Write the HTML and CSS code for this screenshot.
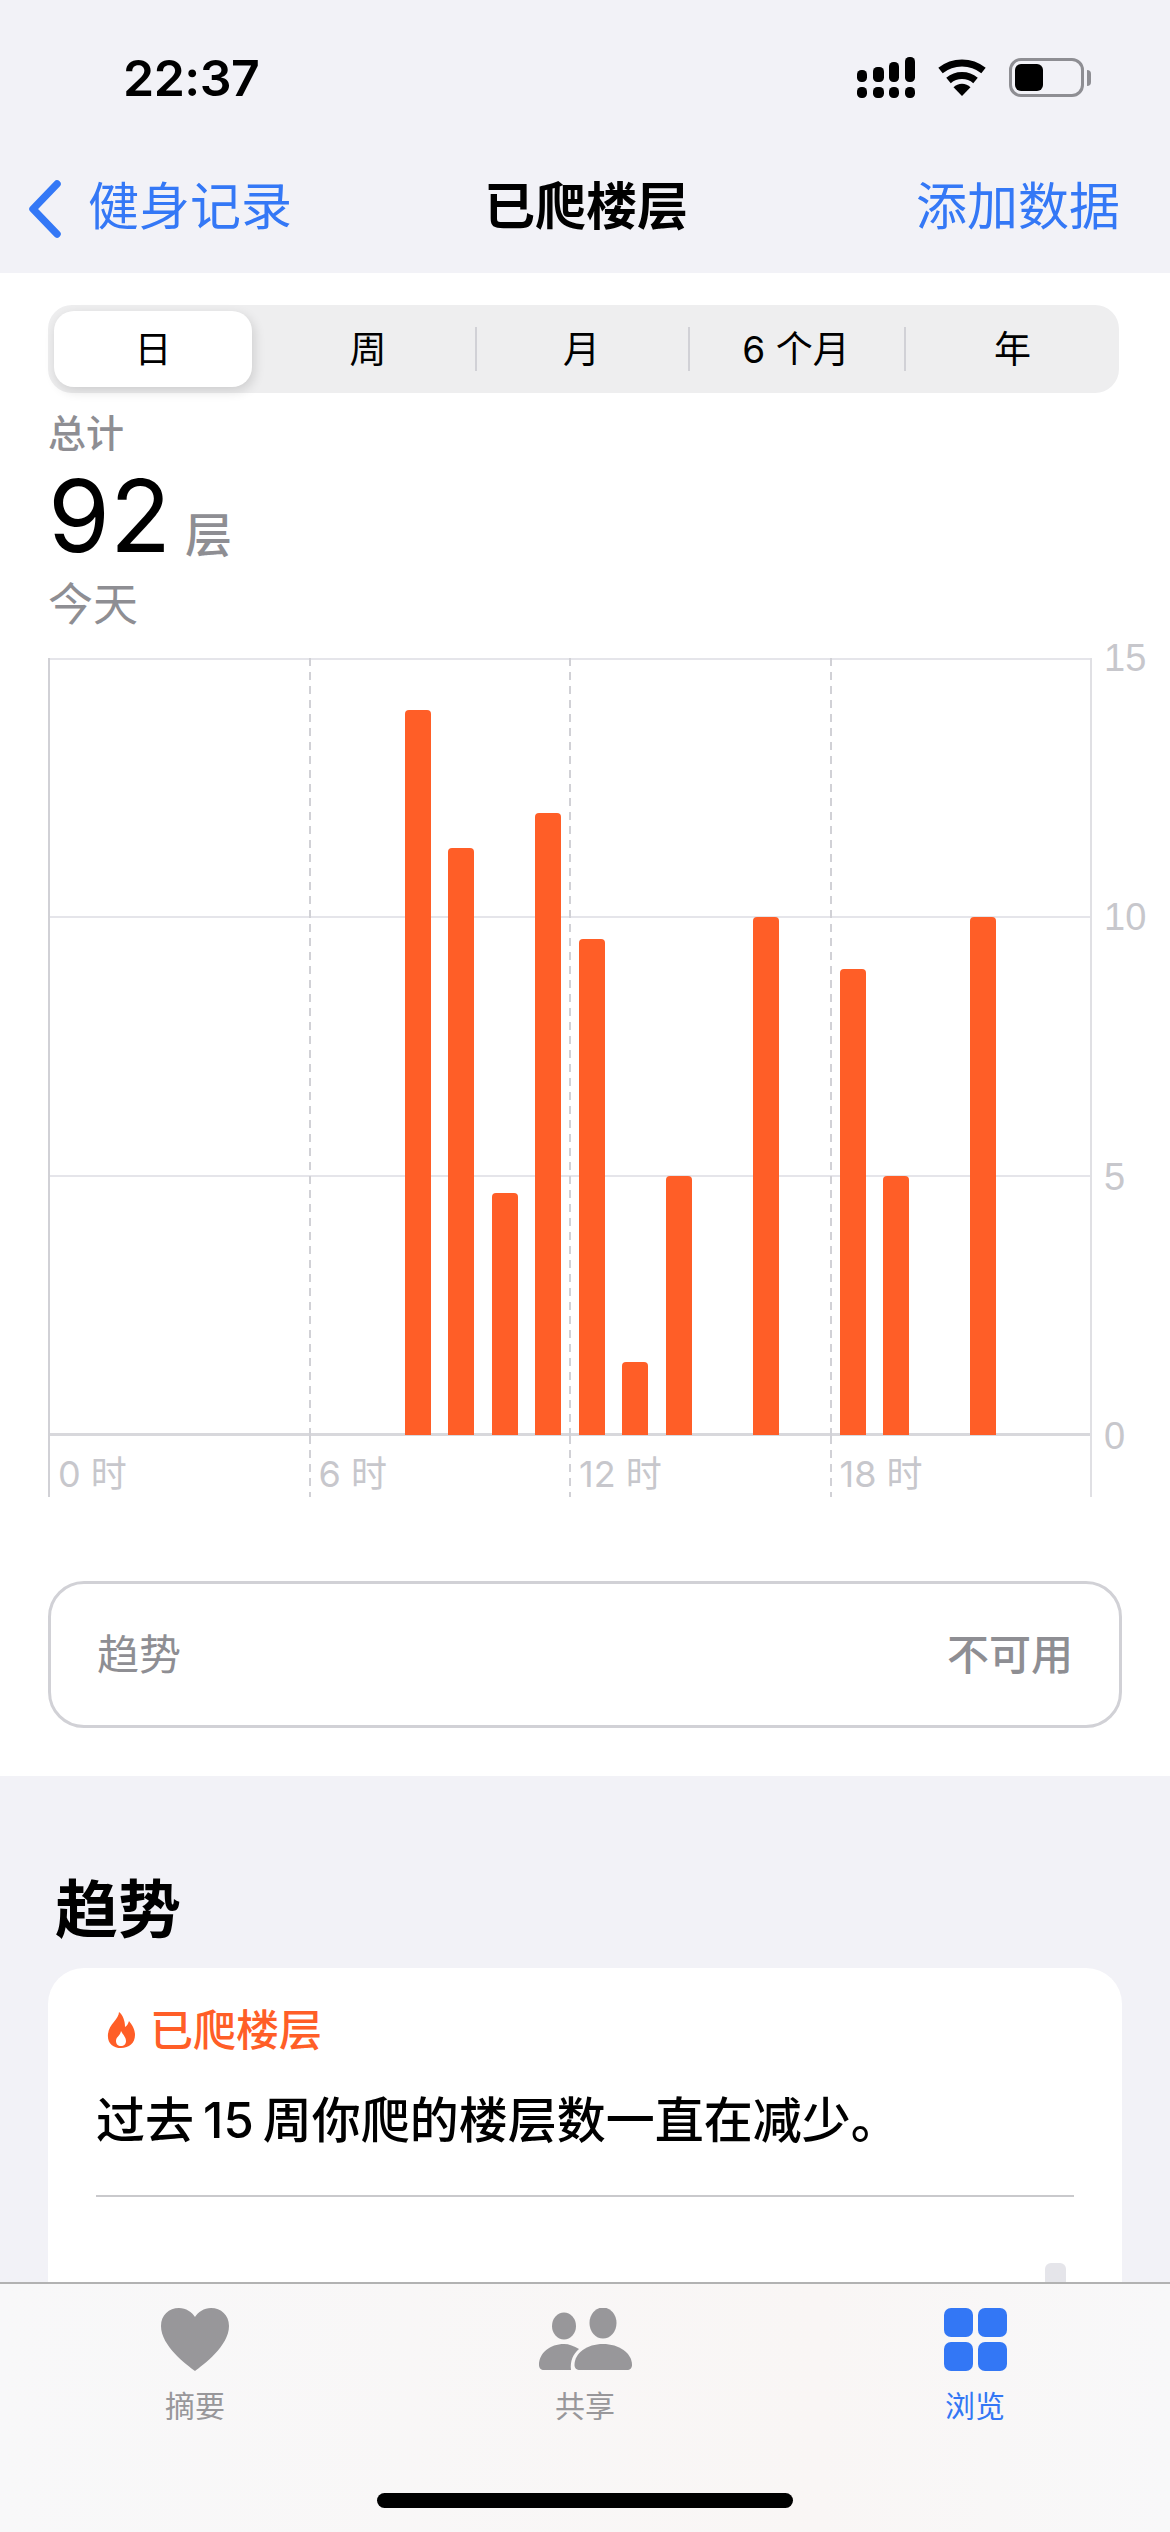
FILE: index.html
```html
<!DOCTYPE html>
<html lang="zh-CN">
  <head>
    <title>已爬楼层</title>
    <meta charset="UTF-8" />
    <meta name="viewport" content="width=device-width" />
    <link rel="stylesheet" href="styles.css">
  </head>
  <body>
    <div class="phone">
      <!-- Status bar and navigation -->
      <header class="top">
        <div class="status">
          <span class="time">22:37</span>
          <div class="status-icons">
            <svg class="signal" width="58" height="41" viewBox="0 0 58 41">
              <rect x="0" y="13" width="10" height="12" rx="4.5" />
              <rect x="16" y="10" width="11" height="15" rx="4.5" />
              <rect x="32" y="5" width="10" height="20" rx="4.5" />
              <rect x="48" y="0" width="10" height="25" rx="4.5" />
              <rect x="0" y="30" width="10" height="11" rx="4.5" />
              <rect x="16" y="30" width="11" height="11" rx="4.5" />
              <rect x="32" y="30" width="10" height="11" rx="4.5" />
              <rect x="48" y="30" width="10" height="11" rx="4.5" />
            </svg>
            <svg class="wifi" width="50" height="38" viewBox="0 0 50 38">
              <path class="wifi-arc" d="M3.5 12.5A34.5 34.5 0 0 1 46.5 12.5" />
              <path class="wifi-arc" d="M11.5 22.5A21 21 0 0 1 38.5 22.5" />
              <path d="M25 38L16.5 29.2A12 12 0 0 1 33.5 29.2Z" />
            </svg>
            <div class="battery">
              <div class="battery-shell"><div class="battery-fill"></div></div>
              <div class="battery-nub"></div>
            </div>
          </div>
        </div>
        <nav class="nav">
          <a class="nav-back">
            <svg width="34" height="58" viewBox="0 0 34 58">
              <path d="M29 4L5 29L29 54" />
            </svg>
            <span>健身记录</span>
          </a>
          <h1>已爬楼层</h1>
          <a class="nav-action">添加数据</a>
        </nav>
      </header>

      <!-- Chart section -->
      <section class="summary">
        <div class="segments">
          <div class="segment active">日</div>
          <div class="segment">周</div>
          <div class="segment split">月</div>
          <div class="segment split">6 个月</div>
          <div class="segment split last">年</div>
        </div>

        <p class="total-label">总计</p>
        <p class="total"><span class="total-num">92</span><span class="total-unit">层</span></p>
        <p class="total-date">今天</p>

        <div class="chart">
          <div class="plot">
            <div class="h-lines"><div></div><div></div><div></div></div>
            <div class="v-lines"><div></div><div></div><div></div><div></div></div>
            <div class="bars">
              <div></div><div></div><div></div><div></div><div></div><div></div>
              <div></div><div></div>
              <div class="bar" style="height: 93.33%"></div>
              <div class="bar" style="height: 75.6%"></div>
              <div class="bar" style="height: 31.1%"></div>
              <div class="bar" style="height: 80%"></div>
              <div class="bar" style="height: 63.8%"></div>
              <div class="bar" style="height: 9.4%"></div>
              <div class="bar" style="height: 33.33%"></div>
              <div></div>
              <div class="bar" style="height: 66.67%"></div>
              <div></div>
              <div class="bar" style="height: 60%"></div>
              <div class="bar" style="height: 33.33%"></div>
              <div></div>
              <div class="bar" style="height: 66.67%"></div>
              <div></div><div></div>
            </div>
          </div>
          <div class="y-axis">
            <span>15</span><span>10</span><span>5</span><span>0</span>
          </div>
          <div class="x-axis">
            <div>0 时</div><div>6 时</div><div>12 时</div><div>18 时</div>
          </div>
        </div>

        <div class="trend-row">
          <span>趋势</span>
          <span class="trend-value">不可用</span>
        </div>
      </section>

      <!-- Trends section -->
      <section class="trends">
        <h2>趋势</h2>
        <div class="trend-card">
          <div class="trend-title">
            <svg width="30" height="38" viewBox="0 0 30 38">
              <path class="flame" d="M13 1C13 8 3 13 2 23C1 32 7 37 15 37C23 37 29 32 29 24C29 18 26 14 23 10C22 13 21 15 19 16C19 10 17 4 13 1Z" />
              <path class="flame-core" d="M15 20C14 25 10 26 10 30C10 33 12 35 15 35C18 35 20 33 20 30C20 26 17 24 15 20Z" />
            </svg>
            <span>已爬楼层</span>
          </div>
          <p class="trend-text">过去 15 周你爬的楼层数一直在减少。</p>
          <div class="trend-divider"></div>
          <div class="mini-bar"></div>
        </div>
      </section>

      <!-- Tab bar sits over the scrolled content -->
      <footer class="tabbar">
        <div class="tab">
          <svg width="68" height="63" viewBox="0 0 68 63">
            <path d="M34 63C26 57 0 38 0 18C0 7 8 0 18 0C25 0 31 4 34 9C37 4 43 0 50 0C60 0 68 7 68 18C68 38 42 57 34 63Z" />
          </svg>
          <span>摘要</span>
        </div>
        <div class="tab">
          <svg width="93" height="63" viewBox="0 0 93 63">
            <ellipse cx="25" cy="18" rx="12" ry="13.5" />
            <ellipse cx="64" cy="15" rx="13.5" ry="15.5" />
            <path d="M0 57C0 45 11 36 25 36C30 36 35 38 40 41C34 46 31 53 32 62H5C2 62 0 60 0 57Z" />
            <path d="M35.5 57C35.5 45 48 36 64 36C80 36 93 45 93 57C93 60 91 62 88 62H41C37.5 62 35.5 60 35.5 57Z" />
          </svg>
          <span>共享</span>
        </div>
        <div class="tab current">
          <div class="browse-icon"><i></i><i></i><i></i><i></i></div>
          <span>浏览</span>
        </div>
        <div class="home-indicator"></div>
      </footer>
    </div>
  </body>
</html>
```

FILE: styles.css
```css
* {
  box-sizing: border-box;
}

body {
  margin: 0;
  background-color: #f2f2f7;
  color: #000;
  font-family: Inter, "Noto Sans CJK SC", sans-serif;
}

p,
h1,
h2 {
  margin: 0;
}

.phone {
  position: relative;
  width: 1170px;
  height: 2532px;
  overflow: hidden;
  background-color: #f2f2f7;
}

/* Status bar and navigation */
.top {
  height: 273px;
  background-color: #f2f2f7;
}

.status {
  display: flex;
  align-items: flex-start;
  justify-content: space-between;
  height: 148px;
  padding: 49px 79px 0 123px;
}

.time {
  font-size: 50px;
  font-weight: 600;
  line-height: 58px;
  letter-spacing: -0.5px;
}

.status-icons {
  display: flex;
  align-items: flex-start;
  padding-top: 8px;
}

.signal {
  margin-right: 22px;
}

.wifi {
  margin-top: 1px;
  margin-right: 22px;
}

.wifi-arc {
  fill: none;
  stroke: #000;
  stroke-width: 7px;
}

.battery {
  display: flex;
  align-items: center;
  height: 39px;
  margin-top: 1px;
}

.battery-shell {
  width: 75px;
  height: 39px;
  padding: 3px;
  border: 3px solid #8e8e93;
  border-radius: 12px;
}

.battery-fill {
  width: 28px;
  height: 27px;
  border-radius: 6px;
  background-color: #000;
}

.battery-nub {
  width: 4px;
  height: 16px;
  margin-left: 3px;
  border-radius: 0 4px 4px 0;
  background-color: #8e8e93;
}

.nav {
  display: grid;
  grid-template-columns: 1fr auto 1fr;
  align-items: center;
  height: 118px;
  padding: 0 50px 0 28px;
  font-size: 51px;
  line-height: 60px;
  color: #3478f6;
}

.nav-back {
  display: flex;
  align-items: center;
  gap: 26px;
}

.nav-back svg {
  display: block;
  margin-top: 4px;
}

.nav-back path {
  fill: none;
  stroke: #3478f6;
  stroke-width: 7.5px;
  stroke-linecap: round;
  stroke-linejoin: round;
}

.nav h1 {
  margin-left: 24px;
  font-size: 51px;
  font-weight: 700;
  color: #000;
}

.nav-action {
  justify-self: end;
}

/* Chart section */
.summary {
  height: 1503px;
  padding: 32px 48px 0;
  background-color: #fff;
}

.segments {
  display: grid;
  grid-template-columns: 207px 214px 213px 216px 1fr;
  width: 1071px;
  height: 88px;
  padding: 6px;
  border-radius: 24px;
  background-color: #eeeeef;
}

.segment {
  position: relative;
  display: flex;
  align-items: center;
  justify-content: center;
  padding-bottom: 4px;
  font-size: 37px;
}

.segment.split::before {
  content: "";
  position: absolute;
  left: 0;
  top: 16px;
  bottom: 16px;
  width: 2px;
  background-color: #d1d1d6;
}

.segment.last {
  padding-left: 8px;
}

.segment.active {
  width: 198px;
  border-radius: 20px;
  background-color: #fff;
  box-shadow: 2px 4px 12px rgba(0, 0, 0, 0.14);
}

.total-label {
  margin-top: 18px;
  font-size: 38px;
  line-height: 44px;
  font-weight: 500;
  color: #8e8e93;
}

.total {
  display: flex;
  align-items: baseline;
  height: 123px;
}

.total-num {
  font-size: 100px;
  line-height: 122px;
}

.total-unit {
  margin-left: 14px;
  font-size: 47px;
  font-weight: 500;
  color: #8e8e93;
}

.total-date {
  font-size: 45px;
  line-height: 54px;
  color: #8e8e93;
}

.chart {
  display: grid;
  grid-template-columns: 1044px 1fr;
  grid-template-rows: 778px 61px;
  margin-top: 26px;
}

.plot {
  display: grid;
  height: 778px;
}

.h-lines,
.v-lines,
.bars {
  grid-area: 1 / 1;
}

.h-lines {
  display: grid;
  grid-template-rows: repeat(3, 1fr);
  border-bottom: 3px solid #d8d8dc;
}

.h-lines div {
  border-top: 2px solid #e5e5ea;
}

.v-lines,
.x-axis {
  display: grid;
  grid-template-columns: repeat(4, 1fr);
  border-right: 2px solid #e0e0e4;
}

.v-lines div,
.x-axis div {
  background-image: repeating-linear-gradient(#d1d1d6 0 8px, transparent 8px 14px);
  background-position: left top;
  background-size: 2px 100%;
  background-repeat: no-repeat;
}

.v-lines div:first-child,
.x-axis div:first-child {
  background-image: linear-gradient(#d1d1d6, #d1d1d6);
}

.bars {
  display: grid;
  grid-template-columns: repeat(24, 1fr);
  align-items: end;
  height: 100%;
  padding-bottom: 1px;
}

.bar {
  justify-self: center;
  width: 26px;
  border-radius: 4px 4px 0 0;
  background-color: #ff5e27;
}

.y-axis {
  display: flex;
  flex-direction: column;
  justify-content: space-between;
  height: 822px;
  margin-top: -22px;
  padding-left: 12px;
  font-family: "Liberation Sans", sans-serif;
  font-size: 38px;
  line-height: 44px;
  color: #c7c7cc;
}

.x-axis div {
  padding: 16px 0 0 10px;
  font-size: 36px;
  line-height: 44px;
  color: #c7c7cc;
}

.trend-row {
  display: flex;
  align-items: center;
  justify-content: space-between;
  width: 1074px;
  height: 147px;
  margin-top: 84px;
  padding: 0 46px 6px 46px;
  border: 3px solid #d1d1d6;
  border-radius: 36px;
  font-size: 42px;
  color: #8e8e93;
}

.trend-value {
  font-weight: 500;
}

/* Trends section */
.trends {
  padding: 74px 48px 0;
}

.trends h2 {
  margin-left: 7px;
  font-size: 63px;
  line-height: 118px;
  font-weight: 700;
}

.trend-card {
  position: relative;
  width: 1074px;
  height: 600px;
  padding: 34px 48px 0;
  border-radius: 36px;
  background-color: #fff;
}

.trend-title {
  display: flex;
  align-items: center;
  gap: 14px;
  padding-left: 10px;
  font-size: 43px;
  line-height: 56px;
  font-weight: 500;
  color: #ff5e27;
}

.flame {
  fill: #ff5e27;
}

.flame-core {
  fill: #fff;
}

.trend-text {
  margin-top: 33px;
  font-size: 49px;
  line-height: 60px;
  font-weight: 500;
  word-spacing: -4px;
}

.trend-divider {
  height: 2px;
  margin-top: 44px;
  background-color: #c9c9cc;
}

.mini-bar {
  width: 21px;
  height: 40px;
  margin: 66px 0 0 949px;
  border-radius: 6px 6px 0 0;
  background-color: #e5e5ea;
}

/* Tab bar */
.tabbar {
  position: absolute;
  left: 0;
  right: 0;
  bottom: 0;
  display: grid;
  grid-template-columns: repeat(3, 1fr);
  height: 250px;
  padding-top: 24px;
  border-top: 2px solid #b2b2b2;
  background: linear-gradient(90deg, #f8f8f9, #f9f6f5 70%, #f8f8f9);
}

.tab {
  display: flex;
  flex-direction: column;
  align-items: center;
  font-size: 30px;
  line-height: 40px;
  color: #98979a;
}

.tab.current {
  color: #3377f5;
}

.tab svg {
  display: block;
  margin-bottom: 15px;
  fill: #98979a;
}

.browse-icon {
  display: grid;
  grid-template-columns: 29px 29px;
  grid-auto-rows: 29px;
  gap: 5px;
  margin-bottom: 15px;
}

.browse-icon i {
  border-radius: 7px;
  background-color: #3377f5;
}

.home-indicator {
  position: absolute;
  left: 377px;
  bottom: 24px;
  width: 416px;
  height: 15px;
  border-radius: 8px;
  background-color: #000;
}
```
